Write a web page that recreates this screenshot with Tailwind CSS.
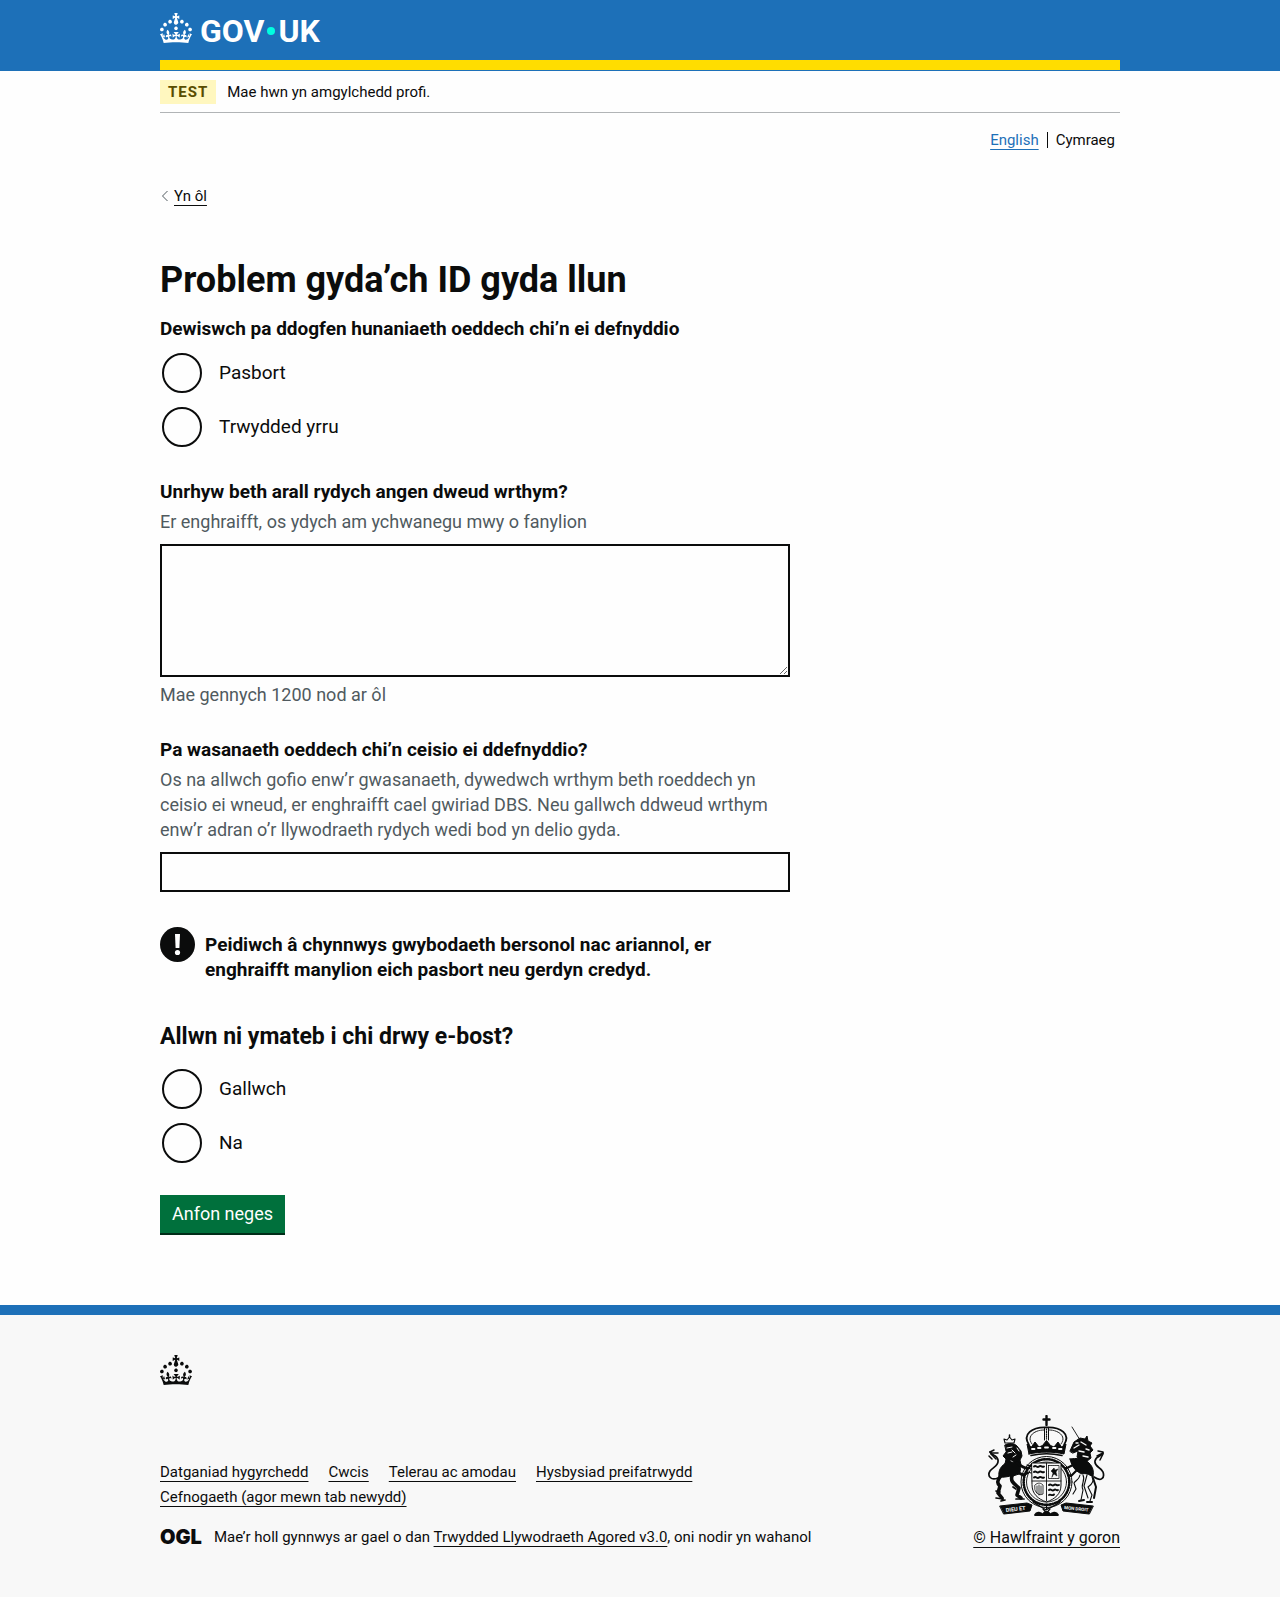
<!DOCTYPE html>
<html lang="cy">
<head>
<meta charset="utf-8">
<meta name="viewport" content="width=device-width, initial-scale=1">
<title>Problem gyda’ch ID gyda llun – GOV.UK</title>
<script src="https://cdn.jsdelivr.net/npm/@tailwindcss/browser@4"></script>
</head>
<body class="bg-[#fefefe] font-['Roboto',sans-serif] text-[#0b0c0c]">
<svg class="hidden" aria-hidden="true">
  <symbol id="crown" viewBox="0 0 32 30">
    <path d="M22.6 10.4c-1 .4-2-.1-2.4-1-.4-.9.1-2 1-2.4.9-.4 2 .1 2.4 1s-.1 2-1 2.4m-5.9 6.7c-.9.4-2-.1-2.4-1-.4-.9.1-2 1-2.4.9-.4 2 .1 2.4 1s-.1 2-1 2.4m10.8-3.7c-1 .4-2-.1-2.4-1-.4-.9.1-2 1-2.4.9-.4 2 .1 2.4 1s0 2-1 2.4m3.3 4.8c-1 .4-2-.1-2.4-1-.4-.9.1-2 1-2.4.9-.4 2 .1 2.4 1s-.1 2-1 2.4M17 4.7l2.3 1.2V2.5l-2.3.7-.2-.2.9-3h-3.4l.9 3-.2.2c-.1.1-2.3-.7-2.3-.7v3.4L15 4.7c.1.1.1.2.2.2l-1.3 4c-.1.2-.1.4-.1.6 0 1.1.8 2 1.9 2.2h.7c1-.2 1.9-1.1 1.9-2.1 0-.2 0-.4-.1-.6l-1.3-4c-.1-.2 0-.2.1-.3m-7.6 5.7c.9.4 2-.1 2.4-1 .4-.9-.1-2-1-2.4-.9-.4-2 .1-2.4 1s0 2 1 2.4m-5 3c.9.4 2-.1 2.4-1 .4-.9-.1-2-1-2.4-.9-.4-2 .1-2.4 1s.1 2 1 2.4m-3.2 4.8c.9.4 2-.1 2.4-1 .4-.9-.1-2-1-2.4-.9-.4-2 .1-2.4 1s0 2 1 2.4m14.8 11c4.4 0 8.6.3 12.3.8 1.1-4.5 2.4-7 3.7-8.8l-2.5-.9c.2 1.3.3 1.9 0 2.7-.4-.4-.8-1.1-1.1-2.3l-1.2 4c.7-.5 1.3-.8 2-.9-1.1 2.5-2.6 3.1-3.5 3-1.1-.2-1.7-1.2-1.5-2.1.3-1.2 1.5-1.5 2.1-.1 1.1-2.3-.8-3-2-2.3 1.9-1.9 2.1-3.5.6-5.6-2.1 1.6-2.1 3.2-1.2 5.5-1.2-1.4-3.2-.6-2.5 1.6.9-1.4 2.1-.5 1.9.8-.2 1.1-1.7 2.1-3.5 1.9-2.7-.2-2.9-2.1-2.9-3.6.7-.1 1.9.5 2.9 1.9l.4-4.3c-1.1 1.1-2.1 1.4-3.2 1.4.4-1.2 2.1-3 2.1-3h-5.4s1.7 1.9 2.1 3c-1.1 0-2.1-.2-3.2-1.4l.4 4.3c1-1.4 2.2-2 2.9-1.9-.1 1.5-.2 3.4-2.9 3.6-1.9.2-3.4-.8-3.5-1.9-.2-1.3 1-2.2 1.9-.8.7-2.3-1.2-3-2.5-1.6.9-2.2.9-3.9-1.2-5.5-1.5 2-1.3 3.7.6 5.6-1.2-.7-3.1 0-2 2.3.6-1.4 1.8-1.1 2.1.1.2.9-.3 1.9-1.5 2.1-.9.2-2.4-.5-3.5-3 .6 0 1.2.3 2 .9l-1.2-4c-.3 1.1-.7 1.9-1.1 2.3-.3-.8-.2-1.4 0-2.7l-2.9.9C1.3 23 2.6 25.5 3.7 30c3.7-.5 7.9-.8 12.3-.8"/>
  </symbol>
</svg>

<header class="border-b border-[#1d70b8] bg-[#1d70b8] text-white">
  <div class="mx-auto max-w-[960px] border-b-10 border-[#ffdd00]">
    <a href="#" class="flex h-15 items-center gap-2 pb-1" aria-label="GOV.UK">
      <svg class="h-[30px] w-8 fill-current"><use href="#crown"/></svg>
      <span class="flex items-center pt-1.5 text-[32px] leading-8 font-bold">GOV<span class="mx-[3px] size-2 rounded-full bg-[#00ffe0]"></span>UK</span>
    </a>
  </div>
</header>

<div class="mx-auto max-w-[960px]">
  <div class="flex items-center border-b border-[#b1b4b6] pt-[9px] pb-2 text-[15px]">
    <strong class="mr-[11px] bg-[#fff7bf] px-2 leading-6 font-bold tracking-[1px] text-[#594d00]">TEST</strong>
    <span>Mae hwn yn amgylchedd profi.</span>
  </div>

  <nav class="mt-[15px] flex items-center justify-end pr-[5px] text-[15px] leading-6" aria-label="Iaith">
    <a href="#" class="text-[#1d70b8] underline underline-offset-4">English</a>
    <span class="mx-2 h-4 w-px bg-[#0b0c0c]"></span>
    <span>Cymraeg</span>
  </nav>

  <div class="mt-[34px] flex">
    <a href="#" class="flex items-center gap-1 text-[15px] leading-5">
      <svg class="h-3 w-2.5 fill-none stroke-[#505a5f]" viewBox="0 0 10 12"><path d="M7.500 1 2.500 6l5 5"/></svg>
      <span class="underline underline-offset-4">Yn ôl</span>
    </a>
  </div>

  <main class="mt-[54px] max-w-[630px]">
    <form>
      <h1 class="text-4xl leading-10 font-bold">Problem gyda’ch ID gyda llun</h1>

      <fieldset class="mt-[17px]">
        <legend class="mb-2.5 text-[19px] leading-6 font-bold">Dewiswch pa ddogfen hunaniaeth oeddech chi’n ei defnyddio</legend>
        <div class="flex flex-col gap-2.5 text-[19px]">
          <label class="flex h-11 items-center gap-[17px] pl-0.5"><input type="radio" name="id" class="size-10 appearance-none rounded-full border-2 border-[#0b0c0c]">Pasbort</label>
          <label class="flex h-11 items-center gap-[17px] pl-0.5"><input type="radio" name="id" class="size-10 appearance-none rounded-full border-2 border-[#0b0c0c]">Trwydded yrru</label>
        </div>
      </fieldset>

      <div class="mt-[30px]">
        <label for="detail" class="block text-[19px] leading-[25px] font-bold">Unrhyw beth arall rydych angen dweud wrthym?</label>
        <p class="mt-[5px] text-lg leading-[25px] text-[#505a5f]">Er enghraifft, os ydych am ychwanegu mwy o fanylion</p>
        <textarea id="detail" class="mt-2.5 block h-[133px] w-full border-2 border-[#0b0c0c] p-1"></textarea>
        <p class="mt-[5px] text-lg leading-[25px] text-[#505a5f]">Mae gennych 1200 nod ar ôl</p>
      </div>

      <div class="mt-[30px]">
        <label for="service" class="block text-[19px] leading-[25px] font-bold">Pa wasanaeth oeddech chi’n ceisio ei ddefnyddio?</label>
        <p class="mt-[5px] text-lg leading-[25px] text-[#505a5f]">Os na allwch gofio enw’r gwasanaeth, dywedwch wrthym beth roeddech yn ceisio ei wneud, er enghraifft cael gwiriad DBS. Neu gallwch ddweud wrthym enw’r adran o’r llywodraeth rydych wedi bod yn delio gyda.</p>
        <input id="service" type="text" class="mt-2.5 block h-10 w-full border-2 border-[#0b0c0c] px-1">
      </div>

      <div class="mt-[35px] flex items-start gap-2.5">
        <svg class="size-[35px] shrink-0" viewBox="0 0 35 35" aria-hidden="true"><circle cx="17.500" cy="17.500" r="17.500" fill="#0b0c0c"/><path d="M15 7h5l-.6 14h-3.800z" fill="#fff"/><circle cx="17.500" cy="25.500" r="2.600" fill="#fff"/></svg>
        <strong class="max-w-[530px] pt-[5px] text-[19px] leading-[25px] font-bold">Peidiwch â chynnwys gwybodaeth bersonol nac ariannol, er enghraifft manylion eich pasbort neu gerdyn credyd.</strong>
      </div>

      <fieldset class="mt-10">
        <legend class="mb-[15px] text-[23px] leading-[30px] font-bold">Allwn ni ymateb i chi drwy e-bost?</legend>
        <div class="flex flex-col gap-2.5 text-[19px]">
          <label class="flex h-11 items-center gap-[17px] pl-0.5"><input type="radio" name="reply" class="size-10 appearance-none rounded-full border-2 border-[#0b0c0c]">Gallwch</label>
          <label class="flex h-11 items-center gap-[17px] pl-0.5"><input type="radio" name="reply" class="size-10 appearance-none rounded-full border-2 border-[#0b0c0c]">Na</label>
        </div>
      </fieldset>

      <button type="button" class="mt-[30px] block h-10 border-b-2 border-[#002d18] bg-[#00703c] px-3 text-lg text-white">Anfon neges</button>
    </form>
  </main>
</div>

<footer class="mt-[70px] border-t-10 border-[#1d70b8] bg-[#f8f8f8] pt-10 pb-[47px] text-[15px] leading-[25px]">
  <div class="mx-auto max-w-[960px]">
    <svg class="h-[30px] w-8 fill-[#0b0c0c]" aria-hidden="true"><use href="#crown"/></svg>
    <div class="mt-[30px] flex items-end justify-between gap-8">
      <div>
        <ul class="flex max-w-[700px] flex-wrap gap-x-5">
          <li><a href="#" class="underline underline-offset-4">Datganiad hygyrchedd</a></li>
          <li><a href="#" class="underline underline-offset-4">Cwcis</a></li>
          <li><a href="#" class="underline underline-offset-4">Telerau ac amodau</a></li>
          <li><a href="#" class="underline underline-offset-4">Hysbysiad preifatrwydd</a></li>
          <li><a href="#" class="underline underline-offset-4">Cefnogaeth (agor mewn tab newydd)</a></li>
        </ul>
        <div class="mt-[15px] flex items-center gap-3">
          <span class="font-['Inter',sans-serif] text-xl leading-[25px] font-black">OGL</span>
          <span>Mae’r holl gynnwys ar gael o dan <a href="#" class="underline underline-offset-4">Trwydded Llywodraeth Agored v3.0</a>, oni nodir yn wahanol</span>
        </div>
      </div>
      <a href="#" class="flex flex-col items-center gap-2 text-base leading-[25px] whitespace-nowrap underline underline-offset-4">
        <svg class="h-[102px] w-[117px]" viewBox="0 0 117 102" fill="none" stroke="#0b0c0c" stroke-linecap="round" stroke-linejoin="round" aria-hidden="true">
          <!-- crown -->
          <path d="M58.500 1v9M55.500 4.500h6" stroke-width="2.400"/>
          <path d="M41 30C34 19 44 12 58.500 12.500 73 12 83 19 76 30" stroke-width="1.800"/>
          <path d="M44 29C38 21 47 15 56 15M73 29C79 21 70 15 61 15" stroke-width="1" stroke-dasharray="1.300 1"/>
          <path d="M56.500 13v12M60.500 13v12" stroke-width="1"/>
          <path d="M58.500 14v10" stroke-width="1.200" stroke-dasharray="1 1.400"/>
          <path d="M41 39l-2-10 4.500 3 3.500-5 4 5 3.500-1.500 4-5 4 5 3.500 1.500 4-5 3.500 5 4.500-3-2 10c-11-2.500-24-2.500-35 0z" fill="#0b0c0c" stroke-width="1"/>
          <path d="M44 34h2.500M50 33h2.500M57 32.500h3M65 33h2.500M71 34h2.500" stroke="#f8f8f8" stroke-width="1.800"/>
          <path d="M43 40.500c9-2 22-2 31 0" stroke-width="1.500"/>
          <!-- garter and quartered shield -->
          <ellipse cx="58.500" cy="67" rx="25.500" ry="25.500" stroke-width="1"/>
          <ellipse cx="58.500" cy="67" rx="22.800" ry="22.800" stroke-width="2.600" stroke-dasharray="1.200 1.700 .7 1.600"/>
          <ellipse cx="58.500" cy="67" rx="20" ry="20" stroke-width=".9"/>
          <path d="M44 48h29v22c0 9-6 14-14.500 17C50 84 44 79 44 70z" fill="#f8f8f8" stroke-width="1"/>
          <path d="M58.500 48v38M44 66h29" stroke-width=".9"/>
          <path d="M46 51.500c2-2 3 2 5 0s3 1.500 5 0M46 57c2-2 3 2 5 0s3 1.500 5 0M46 62.500c2-2 3 2 5 0s3 1.500 5 0" stroke-width="1.900"/>
          <path d="M61 70c2-2 3 2 5 0s2.500 1.500 5 0M61 75c2-2 3 2 5 0s2 1.500 4 0M61 80c1-1.500 3 1.500 5-.5" stroke-width="1.900"/>
          <rect x="60.500" y="50.500" width="10.500" height="13" stroke-width=".8" stroke-dasharray="1.200 .8"/>
          <path d="M64 62l1-4-2-2 3-3 1 2 3-1-2 3 1 4-3-2z" fill="#0b0c0c" stroke-width=".5"/>
          <path d="M47 70c3-3 6-2 8 0v9c-4 2-7-1-8-4zM49 71v7M51 70v10M53 71v8" stroke-width=".8"/>
          <!-- lion -->
          <path d="M17 28l-1-4 3 1 2.500-3 2.500 3 3-1-1 4z" stroke-width="1.100"/>
          <path d="M21.500 20v2" stroke-width="1.500"/>
          <path d="M17 30c4-2 9-2 12 1l4 5 1 5-2 4 1 5-4-2-3 4-5-4-4 1 1-5-3-3 3-4z" fill="#0b0c0c" stroke-width="1"/>
          <path d="M19 33l5-1M24 35l3 3M20 38l4-1M25 42l3-2M29 33l2 3M23 46l2 1" stroke="#f8f8f8" stroke-width="1"/>
          <path d="M19 47c-6 4-9 8-8 15 5 1 9-1 14-1l6-2c2-3 2-7 0-11z" fill="#0b0c0c" stroke-width="1"/>
          <path d="M29 48c3 2 6 5 10 5M29 57l6 3 4-2" stroke-width="3"/>
          <path d="M39 50l3 1M40 53l3 1M40 57l3 1" stroke-width="1.200"/>
          <path d="M12 62c-3 4-3 6 0 9l-2 7 4 5M24 61c-2 6 3 8 7 12l-2 7 4 3" stroke-width="3.600"/>
          <path d="M8 76l4 1M8 83l7 1M13 86l4-1M28 84l8 0M25 72l3 2" stroke-width="1.700"/>
          <path d="M10 63C3 66-1 61 2 56c3-4 9-5 8-11-1-5-6-4-8-8" stroke-width="1.700"/>
          <path d="M2 37l4-2M3 38l7 0M3 39l5 5M1 41l3 3" stroke-width="1.500"/>
          <!-- unicorn -->
          <path d="M84 12l8 13" stroke-width=".9"/>
          <path d="M82 36l4-9 6-4 5 1 2-3 1 5 4 2-2 3 3 4-3 3 1 5-5 4-6-1-3-4 1-6-5 2z" fill="#0b0c0c" stroke-width="1"/>
          <path d="M86 33l5-3M91 36l5 1M93 27l5 3M95 41l5 1M98 34l3 1M88 28l2 0" stroke="#f8f8f8" stroke-width="1.400"/>
          <path d="M82 44c6-1 14-1 19 4 4 4 5 8 4 14-4-3-8-4-11-3-5-2-10-6-12-15z" fill="#0b0c0c" stroke-width="1"/>
          <path d="M87 49l-8 4-2 0M89 55l-6 6-3-1" stroke-width="2.200"/>
          <path d="M92 60c-1 5-4 5-6 8l2 6-3 5" stroke-width="1.100"/>
          <path d="M95 60c3 6-3 9 0 15l-2 10M104 62c3 5-1 8-4 10l4 8-2 6M99 60l-3 11 4 12" stroke-width="1.100"/>
          <path d="M91 86l5-1M99 87l5 0M105 63l3 9-2 11" stroke-width="2"/>
          <path d="M106 62c7 5 11 1 9-5-2-5-9-5-8-11 1-5 6-4 8-8" stroke-width="1.700"/>
          <path d="M115 37l-5-1M115 38l-6 3M115 39l-3 6" stroke-width="1.500"/>
          <!-- motto scroll -->
          <path d="M12 91l27-3 5 2-2 6-26 3z" fill="#0b0c0c" stroke-width="1"/>
          <path d="M105 91l-27-3-5 2 2 6 26 3z" fill="#0b0c0c" stroke-width="1"/>
          <text x="18" y="97" transform="rotate(-6 18 97)" font-family="Roboto" font-size="5.500" font-weight="700" fill="#f8f8f8" stroke="none">DIEU ET</text>
          <text x="76" y="94" transform="rotate(6 76 94)" font-family="Roboto" font-size="4.500" font-weight="700" fill="#f8f8f8" stroke="none">MON DROIT</text>
          <path d="M45 87c6 4 9 5 13 8 5-3 9-4 14-8" stroke-width="1.300"/>
          <path d="M47 100c2-4 6-2 8 0 1-4 6-4 7 0 2-2 6-4 8 0z" fill="#0b0c0c" stroke-width="1.800"/>
          <path d="M55 94l3.500 4 3.500-4M58.500 89v5" stroke-width="1.200"/>
        </svg>
        <span>© Hawlfraint y goron</span>
      </a>
    </div>
  </div>
</footer>
</body>
</html>
